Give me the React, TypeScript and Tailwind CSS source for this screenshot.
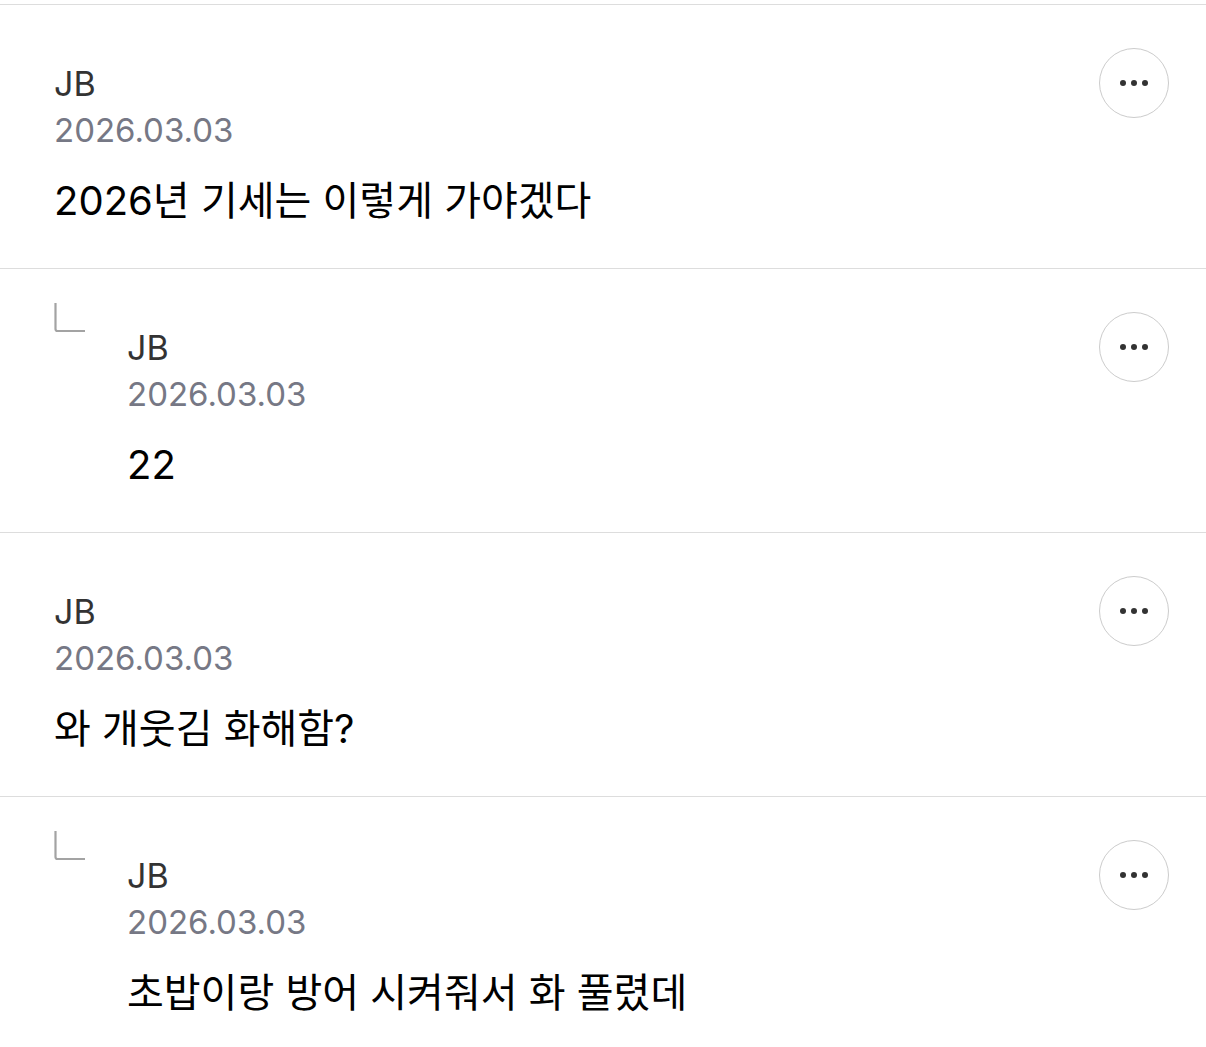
type Comment = {
  id: number;
  author: string;
  date: string;
  body: string;
  reply?: boolean;
};

const comments: Comment[] = [
  { id: 1, author: 'JB', date: '2026.03.03', body: '2026년 기세는 이렇게 가야겠다' },
  { id: 2, author: 'JB', date: '2026.03.03', body: '22', reply: true },
  { id: 3, author: 'JB', date: '2026.03.03', body: '와 개웃김 화해함?' },
  { id: 4, author: 'JB', date: '2026.03.03', body: '초밥이랑 방어 시켜줘서 화 풀렸데', reply: true },
];

function ReplyMark() {
  return (
    <svg width="32" height="30" viewBox="0 0 32 30" className="shrink-0 mt-[34px]">
      <path d="M1.5 0 V26 Q1.5 28 3.5 28 H31" fill="none" stroke="#a3a3a3" strokeWidth="2.2" />
    </svg>
  );
}

function DotsIcon() {
  return (
    <svg width="30" height="8" viewBox="0 0 30 8">
      <circle cx="4" cy="4" r="3" fill="#333333" />
      <circle cx="15" cy="4" r="3" fill="#333333" />
      <circle cx="26" cy="4" r="3" fill="#333333" />
    </svg>
  );
}

function CommentRow({ comment }: { comment: Comment }) {
  return (
    <div className="flex items-start border-b border-[#dddddd] pl-[54px] pr-[37px]">
      {comment.reply && (
        <div className="w-[73px] shrink-0">
          <ReplyMark />
        </div>
      )}
      <div className="flex-1 pt-[56px] pb-[39px]">
        <div className="text-[34px] leading-[46px] text-[#333333]">{comment.author}</div>
        <div className="text-[33px] leading-[46px] text-[#767885]">{comment.date}</div>
        <p className="mt-[20px] text-[40px] leading-[56px] text-black">{comment.body}</p>
      </div>
      <button className="mt-[43px] flex h-[70px] w-[70px] shrink-0 items-center justify-center rounded-full border-[1.5px] border-[#cccccc] bg-white">
        <DotsIcon />
      </button>
    </div>
  );
}

export default function App() {
  return (
    <div
      className="min-h-screen bg-white pt-[4px]"
      style={{ fontFamily: '"Inter", "Noto Sans CJK KR", sans-serif' }}
    >
      <div className="border-t border-[#dddddd]">
        {comments.map((c) => (
          <CommentRow key={c.id} comment={c} />
        ))}
      </div>
    </div>
  );
}
